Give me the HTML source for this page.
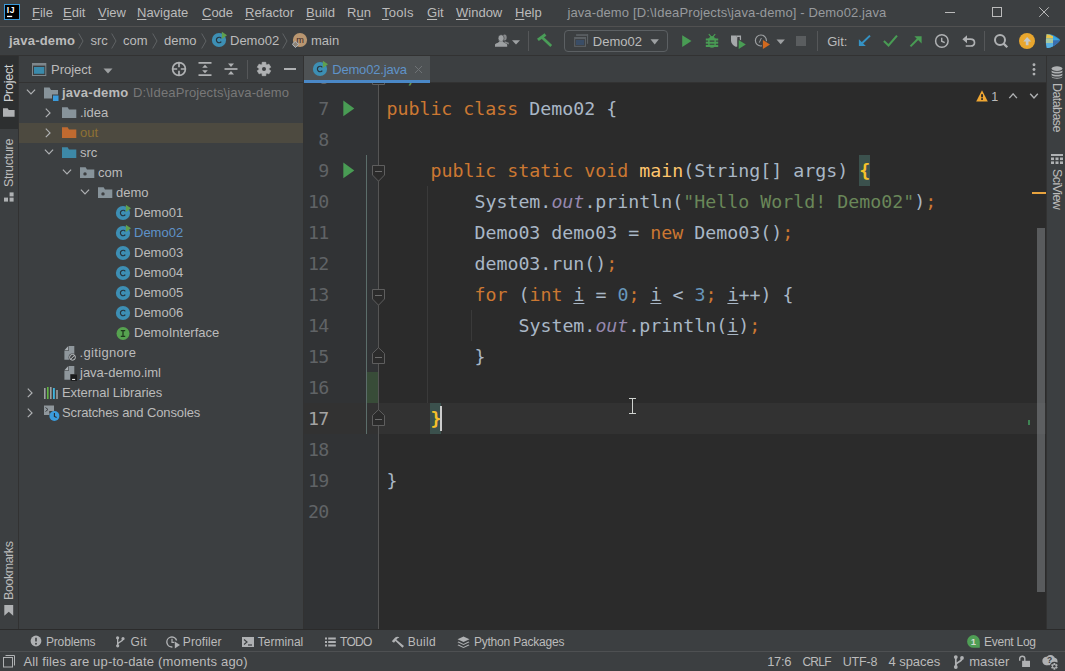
<!DOCTYPE html>
<html>
<head>
<meta charset="utf-8">
<title>java-demo - Demo02.java</title>
<style>
*{box-sizing:border-box;margin:0;padding:0}
html,body{width:1065px;height:671px;overflow:hidden;background:#3c3f41}
body{font-family:"Liberation Sans",sans-serif;font-size:13px;color:#bbbbbb;position:relative}
.a{position:absolute}
.t{position:absolute;white-space:pre;line-height:20px;height:20px}
.v{position:absolute;white-space:pre;line-height:18px;height:18px;transform-origin:0 0;font-size:12px}
u{text-decoration:underline;text-underline-offset:1.5px;text-decoration-thickness:1px}
.code{font-family:"DejaVu Sans Mono","Liberation Mono",monospace;font-size:18.27px;line-height:31px;height:31px;white-space:pre;position:absolute;color:#a9b7c6}
.ln{font-family:"DejaVu Sans Mono","Liberation Mono",monospace;font-size:18.27px;line-height:31px;height:31px;position:absolute;color:#606366;text-align:right;width:40px;letter-spacing:-0.8px}
.k{color:#cc7832}.s{color:#6a8759}.n{color:#6897bb}.f{color:#ffc66d}.i{font-style:italic;color:#9688ae}.b{color:#f5c12a;font-weight:bold}
.ul{text-decoration:underline;text-underline-offset:1.5px;text-decoration-thickness:1px}
</style>
</head>
<body>

<div class="a" style="left:0px;top:0px;width:1065px;height:26px;background:#3c3f41;"></div>
<div class="a" style="left:0px;top:26px;width:1065px;height:1px;background:#515151;"></div>
<div class="a" style="left:0px;top:27px;width:1065px;height:28px;background:#3c3f41;"></div>
<div class="a" style="left:0px;top:55px;width:1065px;height:1px;background:#323232;"></div>
<div class="a" style="left:0px;top:56px;width:18px;height:573px;background:#3c3f41;"></div>
<div class="a" style="left:18px;top:56px;width:1px;height:573px;background:#323232;"></div>
<div class="a" style="left:19px;top:56px;width:284px;height:573px;background:#3c3f41;"></div>
<div class="a" style="left:303px;top:56px;width:1px;height:573px;background:#323232;"></div>
<div class="a" style="left:304px;top:56px;width:743px;height:27px;background:#3c3f41;"></div>
<div class="a" style="left:304px;top:83px;width:75px;height:546px;background:#313335;"></div>
<div class="a" style="left:379px;top:83px;width:668px;height:546px;background:#2b2b2b;"></div>
<div class="a" style="left:1046px;top:56px;width:1px;height:573px;background:#323232;"></div>
<div class="a" style="left:1047px;top:56px;width:18px;height:573px;background:#3c3f41;"></div>
<div class="a" style="left:0px;top:629px;width:1065px;height:1px;background:#2b2b2b;"></div>
<div class="a" style="left:0px;top:630px;width:1065px;height:21px;background:#3c3f41;"></div>
<div class="a" style="left:0px;top:651px;width:1065px;height:1px;background:#4e5052;"></div>
<div class="a" style="left:0px;top:652px;width:1065px;height:19px;background:#3c3f41;"></div>
<svg class="a" style="left:4px;top:4px;" width="16" height="16" viewBox="0 0 16 16"><rect x="0.5" y="0.5" width="15" height="15" fill="#000" stroke="#3a9bdc" stroke-width="1"/><text x="2.8" y="9.2" font-family="Liberation Sans,sans-serif" font-weight="bold" font-size="8.6" letter-spacing="0.6" fill="#fff">IJ</text><rect x="3" y="11.8" width="5.2" height="1.3" fill="#fff"/></svg>
<div class="t" style="left:32px;top:3px;color:#bbbbbb"><u>F</u>ile</div>
<div class="t" style="left:63px;top:3px;color:#bbbbbb"><u>E</u>dit</div>
<div class="t" style="left:98px;top:3px;color:#bbbbbb"><u>V</u>iew</div>
<div class="t" style="left:137px;top:3px;color:#bbbbbb"><u>N</u>avigate</div>
<div class="t" style="left:202px;top:3px;color:#bbbbbb"><u>C</u>ode</div>
<div class="t" style="left:245px;top:3px;color:#bbbbbb"><u>R</u>efactor</div>
<div class="t" style="left:306px;top:3px;color:#bbbbbb"><u>B</u>uild</div>
<div class="t" style="left:347px;top:3px;color:#bbbbbb">R<u>u</u>n</div>
<div class="t" style="left:382px;top:3px;color:#bbbbbb;letter-spacing:0.3px"><u>T</u>ools</div>
<div class="t" style="left:427px;top:3px;color:#bbbbbb"><u>G</u>it</div>
<div class="t" style="left:456px;top:3px;color:#bbbbbb"><u>W</u>indow</div>
<div class="t" style="left:515px;top:3px;color:#bbbbbb"><u>H</u>elp</div>
<div class="t" style="left:567.4px;top:3px;font-size:13px;letter-spacing:0.121px;color:#979a9d">java-demo [D:\IdeaProjects\java-demo] - Demo02.java</div>
<svg class="a" style="left:940px;top:0px;" width="120" height="26" viewBox="0 0 120 26"><path d="M5 12.500H15" stroke="#bbb" stroke-width="1" fill="none"/><rect x="52.500" y="7.500" width="9" height="9" stroke="#bbb" stroke-width="1" fill="none"/><path d="M99.300 7.300L108.800 16.800M108.800 7.300L99.300 16.800" stroke="#bbb" stroke-width="1" fill="none"/></svg>
<div class="t" style="left:9.0px;top:31px;font-size:13px;letter-spacing:0.212px;font-weight:bold;">java-demo</div>
<svg class="a" style="left:77.5px;top:33px;" width="6" height="16" viewBox="0 0 6 16"><path d="M0.7 0.5L5 8L0.7 15.5" stroke="#606365" stroke-width="1" fill="none"/></svg>
<svg class="a" style="left:110.5px;top:33px;" width="6" height="16" viewBox="0 0 6 16"><path d="M0.7 0.5L5 8L0.7 15.5" stroke="#606365" stroke-width="1" fill="none"/></svg>
<svg class="a" style="left:151.5px;top:33px;" width="6" height="16" viewBox="0 0 6 16"><path d="M0.7 0.5L5 8L0.7 15.5" stroke="#606365" stroke-width="1" fill="none"/></svg>
<svg class="a" style="left:200.5px;top:33px;" width="6" height="16" viewBox="0 0 6 16"><path d="M0.7 0.5L5 8L0.7 15.5" stroke="#606365" stroke-width="1" fill="none"/></svg>
<svg class="a" style="left:281.5px;top:33px;" width="6" height="16" viewBox="0 0 6 16"><path d="M0.7 0.5L5 8L0.7 15.5" stroke="#606365" stroke-width="1" fill="none"/></svg>
<div class="t" style="left:90.5px;top:31px;">src</div>
<div class="t" style="left:123px;top:31px;">com</div>
<div class="t" style="left:164px;top:31px;">demo</div>
<div class="t" style="left:230px;top:31px;">Demo02</div>
<div class="t" style="left:311px;top:31px;">main</div>
<svg class="a" style="left:211.15px;top:31.95px;overflow:visible" width="17" height="16" viewBox="0 0 17 16"><circle cx="8" cy="8" r="7.1" fill="#3d8fb4"/><path d="M10.3 6.3A2.75 2.75 0 1 0 10.3 9.7" fill="none" stroke="#26353f" stroke-width="1.15"/><path d="M10.9 -0.3L16 3.3L10.900 6.900Z" fill="#5fa04e"/></svg>
<svg class="a" style="left:292px;top:32px;" width="16" height="16" viewBox="0 0 16 16"><circle cx="8" cy="8" r="7.1" fill="#b99670"/><text x="8.100" y="10.700" text-anchor="middle" font-family="Liberation Sans,sans-serif" font-size="9.2" fill="#3b2626">m</text><path d="M0.300 12.350L3.400 9.200L6.600 12.350L3.400 15.500Z" fill="#8d8478" stroke="#b0bac2" stroke-width="1"/></svg>
<svg class="a" style="left:494px;top:33px;" width="28" height="16" viewBox="0 0 28 16"><g fill="#9da0a2"><ellipse cx="10.600" cy="4.600" rx="2.100" ry="3" opacity="0.75"/><path d="M10.800 8.200L14.800 9.700V11.600L10.200 9.600Z" opacity="0.75"/><ellipse cx="7.100" cy="5.200" rx="3" ry="3.500" stroke="#3c3f41" stroke-width="0.600"/><path d="M1 13.700V11.700C1 10.400 4 10.200 5.500 8.200H8.700C10.200 10.200 13.200 10.400 13.200 11.700V13.700Z"/><path d="M18 7.200h8l-4 4.300z"/></g></svg>
<div class="a" style="left:528px;top:31px;width:1px;height:20px;background:#555759;"></div>
<svg class="a" style="left:536px;top:33px;" width="18" height="16" viewBox="0 0 18 16"><path d="M1.900 6.900L9.500 1.500" stroke="#4a9d58" stroke-width="3" fill="none"/><path d="M6.200 4.600L15.200 12.900" stroke="#4a9d58" stroke-width="2.700" fill="none"/></svg>
<div class="a" style="left:564px;top:30px;width:104px;height:22px;border:1px solid #5c6063;border-radius:4px"></div>
<svg class="a" style="left:574px;top:34px;" width="15" height="14" viewBox="0 0 15 14"><g fill="#5b6064"><rect x="2.100" y="0.200" width="12" height="1.700"/><rect x="13" y="0.200" width="1.100" height="9.600"/><rect x="0.100" y="3" width="11.900" height="9.900"/></g><rect x="1.200" y="5.100" width="9.700" height="6.700" fill="#3c3f41"/><rect x="1.900" y="5.900" width="8.300" height="5.100" fill="#3a4d66"/></svg>
<div class="t" style="left:592.8px;top:32px;color:#bbbbbb">Demo02</div>
<svg class="a" style="left:649.5px;top:39px;" width="10" height="6" viewBox="0 0 10 6"><path d="M0.5 0.3h8.400L4.700 5.400z" fill="#9da0a2"/></svg>
<svg class="a" style="left:681px;top:33px;" width="12" height="16" viewBox="0 0 12 16"><path d="M1.200 2.200L10.500 8.100L1.200 14Z" fill="#499c54"/></svg>
<svg class="a" style="left:704px;top:33px;" width="16" height="16" viewBox="0 0 16 16"><g fill="#499c54"><circle cx="8" cy="5.700" r="2.700"/><path d="M4.100 5.500H11.900V11C11.900 13.200 10.200 14.700 8 14.700C5.800 14.700 4.100 13.200 4.100 11Z"/><rect x="1.800" y="5.500" width="12.400" height="2"/><rect x="1.800" y="8.700" width="12.400" height="2"/><rect x="1.800" y="11.900" width="12.400" height="2.100"/></g><path d="M4.800 1.200L7.200 3.900M11.200 1.200L8.800 3.900" stroke="#499c54" stroke-width="1.200" fill="none"/><path d="M5.600 8.100H10.400M5.600 11.300H10.400" stroke="#3c3f41" stroke-width="1.100"/></svg>
<svg class="a" style="left:729px;top:33px;overflow:visible" width="18" height="17" viewBox="0 0 18 17"><path d="M2 2.600H7.300V13.900C4.500 13 2 10.500 2 7.500Z" fill="#a6a9ab"/><path d="M7.300 3.250H11.400V8" fill="none" stroke="#a6a9ab" stroke-width="1.300"/><path d="M7.800 3.900V13.600" stroke="#dfe0e1" stroke-width="0.800"/><path d="M8.700 5.200L18.200 11.400L8.700 17.600Z" fill="#3c3f41"/><path d="M9.700 6.900L16.800 11.400L9.700 16Z" fill="#499c54"/></svg>
<svg class="a" style="left:754px;top:33px;overflow:visible" width="18" height="17" viewBox="0 0 18 17"><circle cx="6.900" cy="7.500" r="5.500" fill="none" stroke="#9da0a2" stroke-width="1.200"/><path d="M7.400 5L5.300 9.600" stroke="#9da0a2" stroke-width="1" fill="none"/><path d="M7.900 5.200L17.400 11.400L7.900 17.600Z" fill="#3c3f41"/><path d="M8.900 6.900L16 11.400L8.900 16Z" fill="#d2691e"/></svg>
<svg class="a" style="left:776px;top:39.2px;" width="10" height="6" viewBox="0 0 10 6"><path d="M0.5 0.5h8.400L4.700 5.300z" fill="#9da0a2"/></svg>
<div class="a" style="left:796px;top:36px;width:10px;height:10px;background:#5a5d5f;"></div>
<div class="a" style="left:817px;top:31px;width:1px;height:20px;background:#555759;"></div>
<div class="t" style="left:827.2px;top:32px;color:#bbbbbb">Git:</div>
<svg class="a" style="left:858px;top:34px;" width="14" height="14" viewBox="0 0 14 14"><path d="M12 1.600L3.500 9.800" stroke="#3592c4" stroke-width="2" fill="none"/><path d="M0.900 5.200V12.100H7.800Z" fill="#3592c4"/></svg>
<svg class="a" style="left:883px;top:34px;" width="16" height="14" viewBox="0 0 16 14"><path d="M0.900 7.100L5.500 11.400L14 1.600" stroke="#499c54" stroke-width="2.100" fill="none"/></svg>
<svg class="a" style="left:909px;top:34px;" width="14" height="14" viewBox="0 0 14 14"><path d="M1.500 12.400L10.300 3.500" stroke="#499c54" stroke-width="2" fill="none"/><path d="M5.400 2.200H12.600V9.400Z" fill="#499c54"/></svg>
<svg class="a" style="left:934px;top:33px;" width="16" height="16" viewBox="0 0 16 16"><circle cx="7.850" cy="8" r="6.250" fill="none" stroke="#afb1b3" stroke-width="1.500"/><path d="M7.700 4.700V8.200L10.700 9.700" stroke="#afb1b3" stroke-width="1.400" fill="none"/></svg>
<svg class="a" style="left:962px;top:34px;" width="14" height="14" viewBox="0 0 14 14"><path d="M0.400 5.200L5 1.200V9.200Z" fill="#afb1b3"/><path d="M4.500 5.200H8.500C11.500 5.200 12.500 7 12.500 8.700C12.500 10.500 11.500 12 8.500 12H3.700" stroke="#afb1b3" stroke-width="1.700" fill="none"/></svg>
<div class="a" style="left:984px;top:31px;width:1px;height:20px;background:#555759;"></div>
<svg class="a" style="left:993px;top:33px;" width="16" height="16" viewBox="0 0 16 16"><circle cx="7" cy="6.900" r="5" fill="none" stroke="#afb1b3" stroke-width="2"/><path d="M10.600 10.600L14.300 14.300" stroke="#afb1b3" stroke-width="2.200"/></svg>
<svg class="a" style="left:1019px;top:33px;" width="16" height="16" viewBox="0 0 16 16"><circle cx="8" cy="8" r="8" fill="#e8a62e"/><path d="M8.100 3.900L12.300 8.400H9.500V12.300H6.800V8.400H4.300Z" fill="#c4c8ca"/></svg>
<svg class="a" style="left:1045px;top:33px;" width="16" height="16" viewBox="0 0 16 16"><path d="M1.500 1.200C6 0.600 12 3.500 15.200 7.200C12 11.500 6 15.200 1.800 15C0.600 11 0.600 5 1.500 1.200Z" fill="#2f8fd0"/><path d="M8 3L15.200 7.200L8 7.600Z" fill="#3ba7e0"/><path d="M8 7.600L15.200 7.200C13 10 10.500 12 8 13.200Z" fill="#3a6fb0"/><path d="M1.500 1.200C3.500 1 6 2 8 3V5.600H1Z" fill="#e8c44a"/><path d="M1 5.600H8V10H0.900Z" fill="#a8c8a0"/><path d="M0.900 10H8V13.200C6 14.400 3.500 15.100 1.800 15Z" fill="#58b0e0"/></svg>
<div class="a" style="left:0px;top:56px;width:18px;height:73px;background:#2d2f30;"></div>
<div class="v" style="left:0px;top:101.9px;transform:rotate(-90deg);font-size:12.5px;letter-spacing:-0.234px;color:#cfd1d2">Project</div>
<svg class="a" style="left:3px;top:108px;" width="12" height="10" viewBox="0 0 12 10"><path d="M0 0.3H4.6L5.8 2H11.6V8.8H0Z" fill="#afb1b3"/></svg>
<div class="v" style="left:0px;top:186.6px;transform:rotate(-90deg);font-size:12.5px;letter-spacing:-0.289px;">Structure</div>
<svg class="a" style="left:4px;top:192px;" width="10" height="10" viewBox="0 0 10 10"><rect x="0" y="5.6" width="4" height="4" fill="#afb1b3"/><rect x="5.6" y="5.6" width="4" height="4" fill="#afb1b3"/><rect x="5.6" y="0.4" width="4" height="4" fill="#afb1b3"/></svg>
<div class="v" style="left:0px;top:599.9px;transform:rotate(-90deg);font-size:12.5px;letter-spacing:-0.453px;">Bookmarks</div>
<svg class="a" style="left:4px;top:605px;" width="10" height="12" viewBox="0 0 10 12"><path d="M0.3 0H9.2V10.8L4.75 6.8L0.3 10.8Z" fill="#afb1b3"/></svg>
<svg class="a" style="left:32px;top:63px;" width="15" height="13" viewBox="0 0 15 13"><rect x="0" y="0" width="14.300" height="13" fill="#7f878c"/><rect x="1" y="2.600" width="12.300" height="9.400" fill="#3c3f41"/><rect x="2" y="4" width="10.300" height="6.800" fill="#3a8aab"/></svg>
<div class="t" style="left:51px;top:60px;color:#bbbbbb">Project</div>
<svg class="a" style="left:103px;top:68px;" width="10" height="6" viewBox="0 0 10 6"><path d="M0.5 0.5h9L5 5.5z" fill="#9da0a2"/></svg>
<svg class="a" style="left:171px;top:61px;" width="16" height="16" viewBox="0 0 16 16"><circle cx="8" cy="8" r="6.4" fill="none" stroke="#afb1b3" stroke-width="1.700"/><path d="M8 1.600V6.200M8 9.800V14.400M1.600 8H6.200M9.800 8H14.400" stroke="#afb1b3" stroke-width="1.700"/></svg>
<svg class="a" style="left:198px;top:61px;" width="14" height="16" viewBox="0 0 14 16"><path d="M0.5 1.8H13.5M0.5 14.2H13.5" stroke="#afb1b3" stroke-width="1.7"/><path d="M7 3.700L9.800 6.700H4.200ZM7 12.300L9.800 9.300H4.200Z" fill="#afb1b3"/></svg>
<svg class="a" style="left:224px;top:61px;" width="14" height="16" viewBox="0 0 14 16"><path d="M0.5 8H13.5" stroke="#afb1b3" stroke-width="1.7"/><path d="M7 6L10 2.6H4ZM7 10L10 13.4H4Z" fill="#afb1b3"/></svg>
<div class="a" style="left:247px;top:60px;width:1px;height:19px;background:#555759;"></div>
<svg class="a" style="left:256.9px;top:62px;overflow:visible" width="14" height="14" viewBox="0 0 14 14"><path d="M5.09 2.49L5.23 0.33L8.77 0.33L8.91 2.49L9.95 3.09L11.89 2.13L13.66 5.20L11.86 6.40L11.86 7.60L13.66 8.80L11.89 11.87L9.95 10.91L8.91 11.51L8.77 13.67L5.23 13.67L5.09 11.51L4.05 10.91L2.11 11.87L0.34 8.80L2.14 7.60L2.14 6.40L0.34 5.20L2.11 2.13L4.05 3.09Z" fill="#afb1b3" stroke="#afb1b3" stroke-width="0.8" stroke-linejoin="round"/><circle cx="7" cy="7" r="2" fill="#3c3f41"/></svg>
<div class="a" style="left:284px;top:68px;width:12px;height:2px;background:#afb1b3;"></div>
<div class="a" style="left:19px;top:82px;width:284px;height:1px;background:#323232;"></div>
<div class="a" style="left:19px;top:123px;width:284px;height:20px;background:#4d4a40;"></div>
<svg class="a" style="left:25.5px;top:89.4px;" width="10" height="7" viewBox="0 0 10 7"><path d="M0.900 0.700L5 4.900L9.100 0.700" stroke="#afb1b3" stroke-width="1.200" fill="none"/></svg>
<svg class="a" style="left:44px;top:87px;" width="16" height="15" viewBox="0 0 16 15"><path d="M0 0.5H5.6L7 3H14V10H8V11.5H0Z" fill="#87939a"/><rect x="8.5" y="8" width="6.5" height="6.5" fill="#3a9bdc" stroke="#3c3f41" stroke-width="1"/></svg>
<div class="t" style="left:62.0px;top:83px;font-size:13px;letter-spacing:0.250px;font-weight:bold;">java-demo</div>
<div class="t" style="left:132.9px;top:83px;font-size:13px;letter-spacing:0.121px;color:#787878">D:\IdeaProjects\java-demo</div>
<svg class="a" style="left:45.3px;top:107.7px;" width="7" height="10" viewBox="0 0 7 10"><path d="M0.800 0.700L5 4.900L0.800 9.100" stroke="#afb1b3" stroke-width="1.200" fill="none"/></svg>
<svg class="a" style="left:62px;top:107px;" width="15" height="12" viewBox="0 0 15 12"><path d="M0 0.3H5.6L7 2.6H14.3V11H0Z" fill="#87939a"/></svg>
<div class="t" style="left:80px;top:103px;">.idea</div>
<svg class="a" style="left:45.3px;top:127.7px;" width="7" height="10" viewBox="0 0 7 10"><path d="M0.800 0.700L5 4.900L0.800 9.100" stroke="#afb1b3" stroke-width="1.200" fill="none"/></svg>
<svg class="a" style="left:62px;top:127px;" width="15" height="12" viewBox="0 0 15 12"><path d="M0 0.3H5.6L7 2.6H14.3V11H0Z" fill="#c06a30"/></svg>
<div class="t" style="left:80px;top:123px;color:#8f7134">out</div>
<svg class="a" style="left:43.5px;top:149.4px;" width="10" height="7" viewBox="0 0 10 7"><path d="M0.900 0.700L5 4.900L9.100 0.700" stroke="#afb1b3" stroke-width="1.200" fill="none"/></svg>
<svg class="a" style="left:62px;top:147px;" width="15" height="12" viewBox="0 0 15 12"><path d="M0 0.3H5.6L7 2.6H14.3V11H0Z" fill="#3d88a6"/></svg>
<div class="t" style="left:80px;top:143px;">src</div>
<svg class="a" style="left:61.5px;top:169.4px;" width="10" height="7" viewBox="0 0 10 7"><path d="M0.900 0.700L5 4.900L9.100 0.700" stroke="#afb1b3" stroke-width="1.200" fill="none"/></svg>
<svg class="a" style="left:80px;top:167px;" width="15" height="12" viewBox="0 0 15 12"><path d="M0 0.3H5.6L7 2.6H14.3V11H0Z" fill="#87939a"/><circle cx="5" cy="6.9" r="1.7" fill="#3c3f41"/></svg>
<div class="t" style="left:98px;top:163px;">com</div>
<svg class="a" style="left:79.5px;top:189.4px;" width="10" height="7" viewBox="0 0 10 7"><path d="M0.900 0.700L5 4.900L9.100 0.700" stroke="#afb1b3" stroke-width="1.200" fill="none"/></svg>
<svg class="a" style="left:98px;top:187px;" width="15" height="12" viewBox="0 0 15 12"><path d="M0 0.3H5.6L7 2.6H14.3V11H0Z" fill="#87939a"/><circle cx="5" cy="6.9" r="1.7" fill="#3c3f41"/></svg>
<div class="t" style="left:116px;top:183px;">demo</div>
<svg class="a" style="left:115px;top:205.3px;overflow:visible" width="17" height="16" viewBox="0 0 17 16"><circle cx="8" cy="8" r="7.1" fill="#3d8fb4"/><path d="M10.3 6.3A2.75 2.75 0 1 0 10.3 9.7" fill="none" stroke="#26353f" stroke-width="1.15"/><path d="M10.9 -0.3L16 3.3L10.900 6.900Z" fill="#5fa04e"/></svg>
<div class="t" style="left:134px;top:203px;">Demo01</div>
<svg class="a" style="left:115px;top:225.3px;overflow:visible" width="17" height="16" viewBox="0 0 17 16"><circle cx="8" cy="8" r="7.1" fill="#3d8fb4"/><path d="M10.3 6.3A2.75 2.75 0 1 0 10.3 9.7" fill="none" stroke="#26353f" stroke-width="1.15"/><path d="M10.9 -0.3L16 3.3L10.900 6.900Z" fill="#5fa04e"/></svg>
<div class="t" style="left:134px;top:223px;color:#5f93c9">Demo02</div>
<svg class="a" style="left:115px;top:245.3px;overflow:visible" width="17" height="16" viewBox="0 0 17 16"><circle cx="8" cy="8" r="7.1" fill="#3d8fb4"/><path d="M10.3 6.3A2.75 2.75 0 1 0 10.3 9.7" fill="none" stroke="#26353f" stroke-width="1.15"/></svg>
<div class="t" style="left:134px;top:243px;">Demo03</div>
<svg class="a" style="left:115px;top:265.3px;overflow:visible" width="17" height="16" viewBox="0 0 17 16"><circle cx="8" cy="8" r="7.1" fill="#3d8fb4"/><path d="M10.3 6.3A2.75 2.75 0 1 0 10.3 9.7" fill="none" stroke="#26353f" stroke-width="1.15"/></svg>
<div class="t" style="left:134px;top:263px;">Demo04</div>
<svg class="a" style="left:115px;top:285.3px;overflow:visible" width="17" height="16" viewBox="0 0 17 16"><circle cx="8" cy="8" r="7.1" fill="#3d8fb4"/><path d="M10.3 6.3A2.75 2.75 0 1 0 10.3 9.7" fill="none" stroke="#26353f" stroke-width="1.15"/></svg>
<div class="t" style="left:134px;top:283px;">Demo05</div>
<svg class="a" style="left:115px;top:305.3px;overflow:visible" width="17" height="16" viewBox="0 0 17 16"><circle cx="8" cy="8" r="7.1" fill="#3d8fb4"/><path d="M10.3 6.3A2.75 2.75 0 1 0 10.3 9.7" fill="none" stroke="#26353f" stroke-width="1.15"/></svg>
<div class="t" style="left:134px;top:303px;">Demo06</div>
<svg class="a" style="left:116px;top:326px;" width="15" height="15" viewBox="0 0 15 15"><circle cx="7" cy="7.5" r="6.5" fill="#56a24f"/><path d="M4.8 4.6H9.2M7 4.6V10.4M4.8 10.4H9.2" stroke="#1f3a1e" stroke-width="1.3" fill="none"/></svg>
<div class="t" style="left:134px;top:323px;">DemoInterface</div>
<svg class="a" style="left:63px;top:346px;" width="15" height="16" viewBox="0 0 15 16"><path d="M5.900 0H11.300V13.700H1.400V4.800H5.900Z" fill="#8f979c"/><path d="M1.400 4.200L5.300 0V4.200Z" fill="#aab0b4"/><circle cx="9.500" cy="11.300" r="3.900" fill="#3c3f41"/><circle cx="9.500" cy="11.300" r="2.900" fill="none" stroke="#bfc3c5" stroke-width="1"/><path d="M7.500 13.300L11.500 9.300" stroke="#bfc3c5" stroke-width="1"/></svg>
<div class="t" style="left:79.6px;top:343px;font-size:13px;letter-spacing:0.324px;">.gitignore</div>
<svg class="a" style="left:63px;top:366px;" width="15" height="16" viewBox="0 0 15 16"><path d="M5.900 0H11.300V13.700H1.400V4.800H5.900Z" fill="#8f979c"/><path d="M1.400 4.200L5.300 0V4.200Z" fill="#aab0b4"/><rect x="7.200" y="8.100" width="7.300" height="7.300" fill="#3c3f41"/><rect x="7.700" y="8.600" width="6.300" height="6.300" fill="#1a1b1c"/><rect x="9.100" y="12.900" width="3" height="1.100" fill="#e8e8e8"/></svg>
<div class="t" style="left:80px;top:363px;">java-demo.iml</div>
<svg class="a" style="left:27.3px;top:387.7px;" width="7" height="10" viewBox="0 0 7 10"><path d="M0.800 0.700L5 4.900L0.800 9.100" stroke="#afb1b3" stroke-width="1.200" fill="none"/></svg>
<svg class="a" style="left:44px;top:387px;" width="15" height="12" viewBox="0 0 15 12"><rect x="0" y="1" width="1.6" height="11" fill="#9da0a2"/><rect x="3" y="0" width="1.6" height="12" fill="#62b543"/><rect x="6" y="0" width="1.6" height="12" fill="#9da0a2"/><rect x="9" y="1" width="1.8" height="11" fill="#40b6e0"/><rect x="12.2" y="3" width="1.6" height="9" fill="#9da0a2"/></svg>
<div class="t" style="left:62.0px;top:383px;font-size:13px;letter-spacing:-0.056px;">External Libraries</div>
<svg class="a" style="left:27.3px;top:407.7px;" width="7" height="10" viewBox="0 0 7 10"><path d="M0.800 0.700L5 4.900L0.800 9.100" stroke="#afb1b3" stroke-width="1.200" fill="none"/></svg>
<svg class="a" style="left:44px;top:405px;" width="16" height="17" viewBox="0 0 16 17"><path d="M0 0.5H10V6H5.5V10H0Z" fill="#8f979c"/><path d="M1.5 2.5L4 4.5L1.5 6.5" stroke="#3c3f41" stroke-width="1" fill="none"/><path d="M5 7H8" stroke="#3c3f41" stroke-width="1"/><circle cx="10.4" cy="11" r="5" fill="#3a9bdc"/><path d="M10.4 8V11.4L12.6 12.6" stroke="#2b2b2b" stroke-width="1.1" fill="none"/></svg>
<div class="t" style="left:62.0px;top:403px;font-size:13px;letter-spacing:-0.125px;">Scratches and Consoles</div>
<div class="a" style="left:304px;top:56px;width:126px;height:24px;background:#4e5254;"></div>
<div class="a" style="left:430px;top:82px;width:616px;height:1px;background:#323232;"></div>
<div class="a" style="left:304px;top:80px;width:126px;height:3px;background:#4a88c7;"></div>
<svg class="a" style="left:312px;top:61.2px;overflow:visible" width="17" height="16" viewBox="0 0 17 16"><circle cx="8" cy="8" r="7.1" fill="#3d8fb4"/><path d="M10.3 6.3A2.75 2.75 0 1 0 10.3 9.7" fill="none" stroke="#26353f" stroke-width="1.15"/><path d="M10.9 -0.3L16 3.3L10.900 6.900Z" fill="#5fa04e"/></svg>
<div class="t" style="left:332.2px;top:60px;font-size:13px;letter-spacing:-0.180px;color:#5f93c9">Demo02.java</div>
<svg class="a" style="left:413.5px;top:64.5px;" width="9" height="9" viewBox="0 0 9 9"><path d="M1 1L8 8M8 1L1 8" stroke="#6e7275" stroke-width="1" fill="none"/></svg>
<svg class="a" style="left:1032px;top:62.5px;" width="4" height="13" viewBox="0 0 4 13"><circle cx="2" cy="1.800" r="1.45" fill="#afb1b3"/><circle cx="2" cy="6.500" r="1.45" fill="#afb1b3"/><circle cx="2" cy="11.100" r="1.45" fill="#afb1b3"/></svg>
<div class="a" style="left:304px;top:403px;width:742px;height:31px;background:#323232;"></div>
<div class="a" style="left:378px;top:83px;width:1px;height:546px;background:#555555;"></div>
<div class="a" style="left:366px;top:155px;width:1px;height:279px;background:#5c6e6b;"></div>
<div class="a" style="left:367px;top:372px;width:11px;height:31px;background:#384c38;"></div>
<div class="a" style="left:427px;top:186px;width:1px;height:217px;background:#3a3a3a;"></div>
<div class="a" style="left:471px;top:310px;width:1px;height:31px;background:#3a3a3a;"></div>
<div class="a" style="left:304px;top:83px;width:742px;height:546px;overflow:hidden">
<div class="ln" style="left:-15.6px;top:-20.8px;">6</div>
<div class="ln" style="left:-15.6px;top:10.2px;">7</div>
<div class="ln" style="left:-15.6px;top:41.2px;">8</div>
<div class="ln" style="left:-15.6px;top:72.2px;">9</div>
<div class="ln" style="left:-15.6px;top:103.2px;">10</div>
<div class="ln" style="left:-15.6px;top:134.2px;">11</div>
<div class="ln" style="left:-15.6px;top:165.2px;">12</div>
<div class="ln" style="left:-15.6px;top:196.2px;">13</div>
<div class="ln" style="left:-15.6px;top:227.2px;">14</div>
<div class="ln" style="left:-15.6px;top:258.2px;">15</div>
<div class="ln" style="left:-15.6px;top:289.2px;">16</div>
<div class="ln" style="left:-15.6px;top:320.2px;color:#a4a3a3;">17</div>
<div class="ln" style="left:-15.6px;top:351.2px;">18</div>
<div class="ln" style="left:-15.6px;top:382.2px;">19</div>
<div class="ln" style="left:-15.6px;top:413.2px;">20</div>
<div class="code" style="left:82.4px;top:-20.8px"><span style="color:#629755;font-style:italic"> */</span></div>
<div class="code" style="left:82.4px;top:10.2px"><span class="k">public class </span>Demo02 {</div>
<div class="a" style="left:555px;top:72px;width:11px;height:31px;background:#3b514d"></div>
<div class="code" style="left:126.4px;top:72.2px"><span class="k">public static void </span><span class="f">main</span>(String[] args) <span class="b">{</span></div>
<div class="code" style="left:170.4px;top:103.2px">System.<span class="i">out</span>.println(<span class="s">"Hello World! Demo02"</span>)<span class="k">;</span></div>
<div class="code" style="left:170.4px;top:134.2px">Demo03 demo03 = <span class="k">new </span>Demo03()<span class="k">;</span></div>
<div class="code" style="left:170.4px;top:165.2px">demo03.run()<span class="k">;</span></div>
<div class="code" style="left:170.4px;top:196.2px"><span class="k">for </span>(<span class="k">int </span><span class="ul">i</span> = <span class="n">0</span><span class="k">; </span><span class="ul">i</span> &lt; <span class="n">3</span><span class="k">; </span><span class="ul">i</span>++) {</div>
<div class="code" style="left:214.4px;top:227.2px">System.<span class="i">out</span>.println(<span class="ul">i</span>)<span class="k">;</span></div>
<div class="code" style="left:170.4px;top:258.2px">}</div>
<div class="a" style="left:126px;top:320px;width:11px;height:31px;background:#3b514d"></div>
<div class="code" style="left:126.4px;top:320.2px"><span class="b">}</span></div>
<div class="a" style="left:136px;top:323px;width:2px;height:25px;background:#cccccc"></div>
<div class="code" style="left:82.4px;top:382.2px">}</div>
</div>
<svg class="a" style="left:343px;top:100px;" width="12" height="17" viewBox="0 0 12 17"><path d="M0.3 0.5L11.3 8.4L0.3 16.3Z" fill="#499c54"/></svg>
<svg class="a" style="left:343px;top:162px;" width="12" height="17" viewBox="0 0 12 17"><path d="M0.3 0.5L11.3 8.4L0.3 16.3Z" fill="#499c54"/></svg>
<svg class="a" style="left:372px;top:83px;" width="14" height="3" viewBox="0 0 14 3"><path d="M0.500 -10H12.500V1.500H0.500Z" fill="#2b2b2b" stroke="#5e5e5e" stroke-width="1"/></svg>
<svg class="a" style="left:372px;top:165px;" width="14" height="18" viewBox="0 0 14 18"><path d="M0.500 0.500H12.500V10L6.500 16.200L0.500 10Z" fill="#2b2b2b" stroke="#5e5e5e" stroke-width="1"/><path d="M3 6.500H10" stroke="#6b6b6b" stroke-width="1"/></svg>
<svg class="a" style="left:372px;top:289px;" width="14" height="18" viewBox="0 0 14 18"><path d="M0.500 0.500H12.500V10L6.500 16.200L0.500 10Z" fill="#2b2b2b" stroke="#5e5e5e" stroke-width="1"/><path d="M3 6.500H10" stroke="#6b6b6b" stroke-width="1"/></svg>
<svg class="a" style="left:372px;top:347px;" width="14" height="18" viewBox="0 0 14 18"><path d="M0.500 16.500H12.500V6.400L6.500 0.700L0.500 6.400Z" fill="#2b2b2b" stroke="#5e5e5e" stroke-width="1"/><path d="M3 10.500H10" stroke="#6b6b6b" stroke-width="1"/></svg>
<svg class="a" style="left:372px;top:409px;" width="14" height="18" viewBox="0 0 14 18"><path d="M0.500 16.500H12.500V6.400L6.500 0.700L0.500 6.400Z" fill="#2b2b2b" stroke="#5e5e5e" stroke-width="1"/><path d="M3 10.500H10" stroke="#6b6b6b" stroke-width="1"/></svg>
<svg class="a" style="left:976px;top:90px;" width="12" height="12" viewBox="0 0 12 12"><path d="M6 0.3L11.8 11.5H0.2Z" fill="#f0a732"/><rect x="5.100" y="4.200" width="1.900" height="3.100" fill="#2b2b2b"/><rect x="5.100" y="8.200" width="1.900" height="1.700" fill="#2b2b2b"/></svg>
<div class="t" style="left:991.3px;top:86.8px;color:#bbbbbb;font-size:12.5px">1</div>
<svg class="a" style="left:1008px;top:93px;" width="11" height="6" viewBox="0 0 11 6"><path d="M1.300 5.100L5.100 0.900L8.900 5.100" stroke="#afb1b3" stroke-width="1.400" fill="none"/></svg>
<svg class="a" style="left:1029px;top:93px;" width="11" height="6" viewBox="0 0 11 6"><path d="M1.200 0.700L5 4.900L8.800 0.700" stroke="#afb1b3" stroke-width="1.400" fill="none"/></svg>
<div class="a" style="left:1032px;top:192px;width:14px;height:2px;background:#e8a33e;"></div>
<div class="a" style="left:1028px;top:420px;width:2px;height:5px;background:#3f8454;"></div>
<div class="a" style="left:1037px;top:228px;width:8px;height:364px;background:rgba(174,180,186,0.35);"></div>
<svg class="a" style="left:629px;top:398px;" width="7" height="16" viewBox="0 0 7 16"><path d="M0 0.500H7M0 15.500H7M3.500 0V16" stroke="#cfd2cf" stroke-width="1" fill="none" shape-rendering="crispEdges"/></svg>
<svg class="a" style="left:1051px;top:66px;" width="12" height="13" viewBox="0 0 12 13"><ellipse cx="6" cy="2.6" rx="5.4" ry="2.3" fill="#afb1b3"/><path d="M0.6 4.4C2 6.2 10 6.2 11.4 4.400V6.2C10 8 2 8 0.6 6.2ZM0.6 7.400C2 9.2 10 9.2 11.4 7.400V9.2C10 11 2 11 0.6 9.2ZM0.6 10.400C2 12.2 10 12.2 11.400 10.400V11C10 13.2 2 13.2 0.6 11Z" fill="#afb1b3"/></svg>
<div class="v" style="left:1066px;top:83.2px;transform:rotate(90deg);font-size:12.5px;letter-spacing:-0.587px;">Database</div>
<svg class="a" style="left:1051px;top:154px;" width="12" height="10" viewBox="0 0 12 10"><g fill="#afb1b3"><rect x="0" y="0" width="12" height="2"/><rect x="0" y="3.5" width="3" height="2.600"/><rect x="4.5" y="3.5" width="3" height="2.600"/><rect x="9" y="3.5" width="3" height="2.600"/><rect x="0" y="7.400" width="3" height="2.600"/><rect x="4.5" y="7.400" width="3" height="2.600"/><rect x="9" y="7.400" width="3" height="2.600"/></g></svg>
<div class="v" style="left:1066px;top:168.7px;transform:rotate(90deg);font-size:12.5px;letter-spacing:-0.556px;">SciView</div>
<svg class="a" style="left:29.7px;top:634.7px;" width="12" height="12" viewBox="0 0 12 12"><circle cx="6" cy="6" r="5.400" fill="#afb1b3"/><path d="M6 2.8V6.6" stroke="#3c3f41" stroke-width="1.6"/><circle cx="6" cy="8.8" r="0.95" fill="#3c3f41"/></svg>
<div class="t" style="left:45.9px;top:632.4px;font-size:12px;letter-spacing:-0.141px;">Problems</div>
<svg class="a" style="left:115px;top:636px;" width="11" height="12" viewBox="0 0 11 12"><g fill="#afb1b3"><circle cx="2.600" cy="1.800" r="1.600"/><circle cx="8" cy="2.700" r="1.600"/><circle cx="2.700" cy="9.800" r="1.600"/></g><path d="M2.650 1.800V9.800M8 2.700C8 6.200 2.700 5.600 2.700 8.500" stroke="#afb1b3" stroke-width="1.300" fill="none"/></svg>
<div class="t" style="left:130.4px;top:632.4px;font-size:12px;letter-spacing:0.433px;">Git</div>
<svg class="a" style="left:165.8px;top:635.6px;" width="15" height="13" viewBox="0 0 15 13"><path d="M10.6 4.4A5 5 0 1 0 6.4 11" fill="none" stroke="#afb1b3" stroke-width="1.4"/><path d="M6 2.8V6.3H8.400" stroke="#afb1b3" stroke-width="1.2" fill="none"/><path d="M8.800 5.400L14 9L8.800 12.6Z" fill="#afb1b3"/></svg>
<div class="t" style="left:182.8px;top:632.4px;font-size:12px;letter-spacing:0.113px;">Profiler</div>
<svg class="a" style="left:241.5px;top:637px;" width="12" height="10" viewBox="0 0 12 10"><rect x="0" y="0" width="12" height="10" fill="#afb1b3"/><path d="M2 2.500L5 5L2 7.500" stroke="#3c3f41" stroke-width="1.2" fill="none"/><path d="M6 8H10" stroke="#3c3f41" stroke-width="1.2"/></svg>
<div class="t" style="left:257.7px;top:632.4px;font-size:12px;letter-spacing:0.036px;">Terminal</div>
<svg class="a" style="left:324.5px;top:637px;" width="11" height="10" viewBox="0 0 11 10"><g fill="#afb1b3"><rect x="0" y="0.5" width="2" height="2"/><rect x="3.2" y="0.5" width="7.600" height="2"/><rect x="0" y="4" width="2" height="2"/><rect x="3.2" y="4" width="7.600" height="2"/><rect x="0" y="7.500" width="2" height="2"/><rect x="3.2" y="7.500" width="7.600" height="2"/></g></svg>
<div class="t" style="left:340.1px;top:632.4px;font-size:12px;letter-spacing:-0.749px;">TODO</div>
<svg class="a" style="left:390.5px;top:636px;" width="14" height="12" viewBox="0 0 14 12"><path d="M0.800 5.2L4.2 1.400C5.800 0.400 7.400 0.600 8.400 1.800L6.600 2.300L5.400 3.800L13 10L11.400 11.800L4.400 5L3 6.800Z" fill="#afb1b3"/></svg>
<div class="t" style="left:407.7px;top:632.4px;font-size:12px;letter-spacing:0.304px;">Build</div>
<svg class="a" style="left:457px;top:636px;" width="13" height="13" viewBox="0 0 13 13"><path d="M6.500 0.500L12.500 3.300L6.500 6.100L0.500 3.300Z" fill="#afb1b3"/><path d="M1.600 5.600L0.500 6.300L6.500 9.100L12.500 6.300L11.400 5.600L6.500 7.900Z" fill="#afb1b3"/><path d="M1.600 8.600L0.500 9.300L6.500 12.100L12.500 9.300L11.400 8.600L6.500 10.900Z" fill="#afb1b3"/></svg>
<div class="t" style="left:473.9px;top:632.4px;font-size:12px;letter-spacing:-0.207px;">Python Packages</div>
<svg class="a" style="left:967px;top:635.2px;" width="13" height="13" viewBox="0 0 13 13"><path d="M6.450 0.100A6.350 6.350 0 1 0 6.450 12.800H12.800V6.450A6.350 6.350 0 0 0 6.450 0.100Z" fill="#4f9e55"/><text x="6.400" y="10" text-anchor="middle" font-family="Liberation Sans,sans-serif" font-weight="bold" font-size="9.500" fill="#d0d8d0">1</text></svg>
<div class="t" style="left:984.1px;top:632.4px;font-size:12px;letter-spacing:-0.268px;">Event Log</div>
<svg class="a" style="left:3px;top:655px;" width="12" height="13" viewBox="0 0 12 13"><path d="M2.500 0.500H11.500V10.500" fill="none" stroke="#afb1b3" stroke-width="1"/><rect x="0.500" y="2.500" width="9" height="9.500" fill="none" stroke="#afb1b3" stroke-width="1"/></svg>
<div class="t" style="left:23.4px;top:652px;font-size:13px;letter-spacing:0.181px;">All files are up-to-date (moments ago)</div>
<div class="t" style="left:767.2px;top:652px;font-size:13px;letter-spacing:-0.301px;">17:6</div>
<div class="t" style="left:802.4px;top:652px;font-size:12px;letter-spacing:-0.712px;">CRLF</div>
<div class="t" style="left:842.7px;top:652px;font-size:12.5px;letter-spacing:-0.179px;">UTF-8</div>
<div class="t" style="left:888.4px;top:652px;font-size:13px;letter-spacing:-0.033px;">4 spaces</div>
<svg class="a" style="left:953px;top:655px;" width="12" height="14" viewBox="0 0 12 14"><g fill="#afb1b3"><circle cx="2.800" cy="2.100" r="1.900"/><circle cx="9" cy="2.900" r="1.900"/><circle cx="2.800" cy="12" r="1.900"/></g><path d="M2.800 2.100V12M9 2.900C9 7.600 2.800 6.400 2.800 10.500" stroke="#afb1b3" stroke-width="1.700" fill="none"/></svg>
<div class="t" style="left:969.2px;top:652px;font-size:13px;letter-spacing:0.074px;">master</div>
<svg class="a" style="left:1018px;top:655px;" width="13" height="13" viewBox="0 0 13 13"><rect x="4.100" y="5.800" width="7.900" height="6.200" fill="#afb1b3"/><path d="M1.700 5.800V3.600C1.700 0.400 6.800 0.400 6.800 3.600V6" fill="none" stroke="#afb1b3" stroke-width="1.400"/></svg>
<svg class="a" style="left:1042px;top:655px;overflow:visible" width="17" height="16" viewBox="0 0 17 16"><g fill="#afb1b3"><circle cx="4.500" cy="6" r="4.200"/><circle cx="8.500" cy="4.700" r="4.700"/><circle cx="12" cy="6.300" r="3.500"/><rect x="4.500" y="6" width="8" height="4.200"/></g><text x="7.600" y="8.200" text-anchor="middle" font-family="Liberation Sans,sans-serif" font-weight="bold" font-size="8.500" fill="#3c3f41">?</text><circle cx="12.400" cy="11.300" r="4.500" fill="#3c3f41"/><path d="M11.50 9.18L11.50 7.92L13.30 7.92L13.30 9.18L13.79 9.47L14.88 8.83L15.78 10.39L14.68 11.02L14.68 11.58L15.78 12.21L14.88 13.77L13.79 13.13L13.30 13.42L13.30 14.68L11.50 14.68L11.50 13.42L11.01 13.13L9.92 13.77L9.02 12.21L10.12 11.58L10.12 11.02L9.02 10.39L9.92 8.83L11.01 9.47Z" fill="#afb1b3"/><circle cx="12.400" cy="11.300" r="1.200" fill="#3c3f41"/></svg>
</body>
</html>
